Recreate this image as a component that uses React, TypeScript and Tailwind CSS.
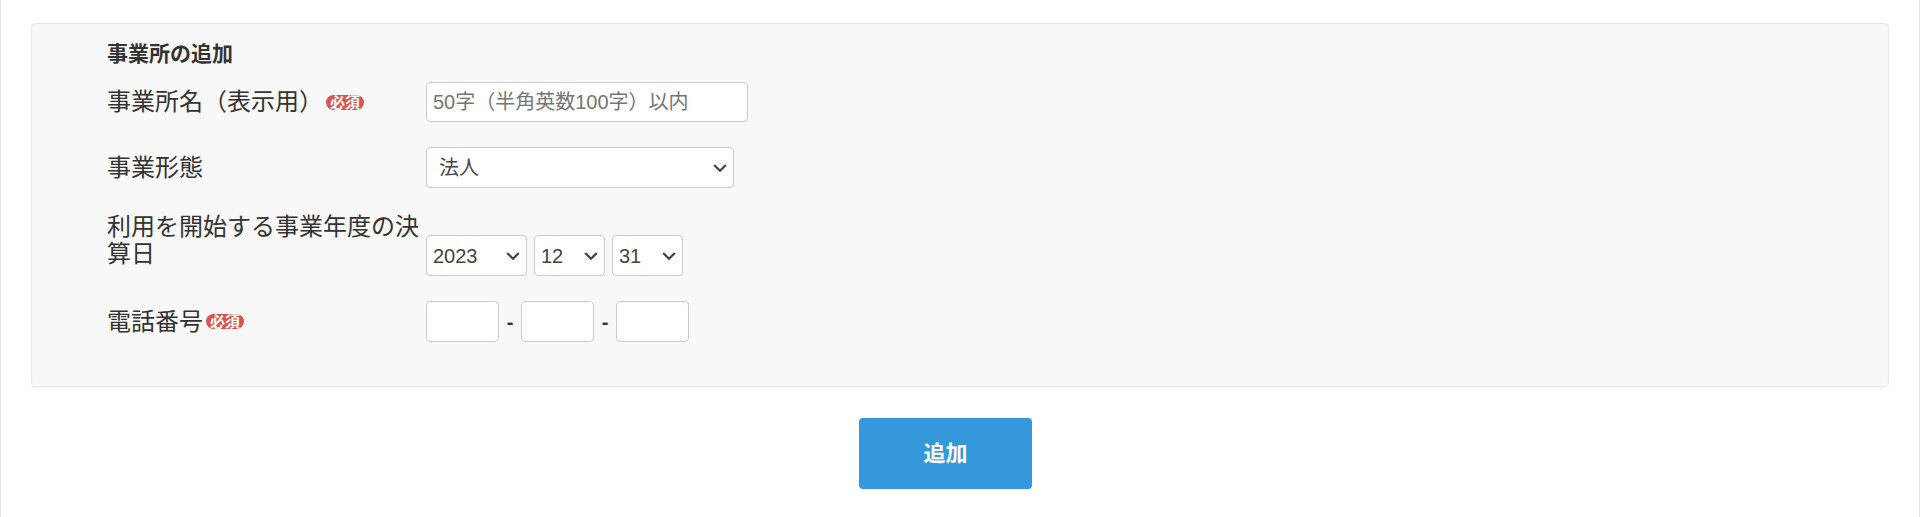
import React from "react";

function Chevron() {
  return (
    <svg
      width="14"
      height="9"
      viewBox="0 0 14 9"
      className="pointer-events-none absolute right-[7px] top-1/2 -translate-y-1/2"
    >
      <path d="M1.2 1.5L7 7.2L12.8 1.5" stroke="#444" strokeWidth="2.2" fill="none" />
    </svg>
  );
}

function Badge() {
  return (
    <span className="ml-[3px] inline-flex h-[15px] items-center rounded-full bg-[#d9534f] px-[4px] text-[15px] font-bold leading-[15px] text-white">
      必須
    </span>
  );
}

function Select({ value, options, w, pad }: { value: string; options: string[]; w: string; pad: string }) {
  return (
    <div className={`relative ${w}`}>
      <select
        defaultValue={value}
        className={`h-[41px] w-full appearance-none rounded-[4px] border border-[#cccccc] bg-white ${pad} text-[20px] text-[#444] outline-none`}
      >
        {options.map((o) => (
          <option key={o}>{o}</option>
        ))}
      </select>
      <Chevron />
    </div>
  );
}

export default function App() {
  return (
    <div className="h-[517px] w-full border-x border-[#e3e3e3] bg-white px-[30px] pt-[23px] font-['Liberation_Sans','Noto_Sans_CJK_JP',sans-serif] text-[#333]">
      <div className="rounded-[5px] border border-[#e8e8e8] bg-[#f8f8f8] pb-[44px] pl-[75px] pt-[16px] shadow-[0_1px_1px_rgba(0,0,0,0.04)]">
        <div className="text-[21px] font-bold leading-[28px]">事業所の追加</div>

        <div className="mt-[14px] flex items-center">
          <div className="flex w-[319px] items-center text-[24px] leading-[28px]">
            <span>事業所名（表示用）</span>
            <Badge />
          </div>
          <input
            placeholder="50字（半角英数100字）以内"
            className="h-[40px] w-[322px] rounded-[4px] border border-[#cccccc] bg-white px-[6px] text-[20px] text-[#333] outline-none placeholder:text-[#757575]"
          />
        </div>

        <div className="mt-[25px] flex items-center">
          <div className="w-[319px] text-[24px] leading-[28px]">事業形態</div>
          <Select value="法人" options={["法人", "個人"]} w="w-[308px]" pad="pl-[12px]" />
        </div>

        <div className="mt-[25px] flex items-start">
          <div className="w-[319px] text-[24px] leading-[27px]">利用を開始する事業年度の決算日</div>
          <div className="mt-[22px] flex gap-[7px]">
            <Select value="2023" options={["2022", "2023", "2024"]} w="w-[101px]" pad="pl-[6px]" />
            <Select value="12" options={["1", "2", "3", "4", "5", "6", "7", "8", "9", "10", "11", "12"]} w="w-[71px]" pad="pl-[6px]" />
            <Select value="31" options={["28", "29", "30", "31"]} w="w-[71px]" pad="pl-[6px]" />
          </div>
        </div>

        <div className="mt-[25px] flex items-center">
          <div className="flex w-[319px] items-center text-[24px] leading-[28px]">
            <span>電話番号</span>
            <Badge />
          </div>
          <div className="flex items-center">
            <input className="h-[41px] w-[73px] rounded-[4px] border border-[#cccccc] bg-white outline-none" />
            <span className="w-[22px] text-center text-[20px] font-bold text-[#333]">-</span>
            <input className="h-[41px] w-[73px] rounded-[4px] border border-[#cccccc] bg-white outline-none" />
            <span className="w-[22px] text-center text-[20px] font-bold text-[#333]">-</span>
            <input className="h-[41px] w-[73px] rounded-[4px] border border-[#cccccc] bg-white outline-none" />
          </div>
        </div>
      </div>

      <div className="mt-[31px] flex pl-[828px]">
        <button className="h-[71px] w-[173px] rounded-[4px] bg-[#3498db] text-[22px] font-bold text-white">
          追加
        </button>
      </div>
    </div>
  );
}
